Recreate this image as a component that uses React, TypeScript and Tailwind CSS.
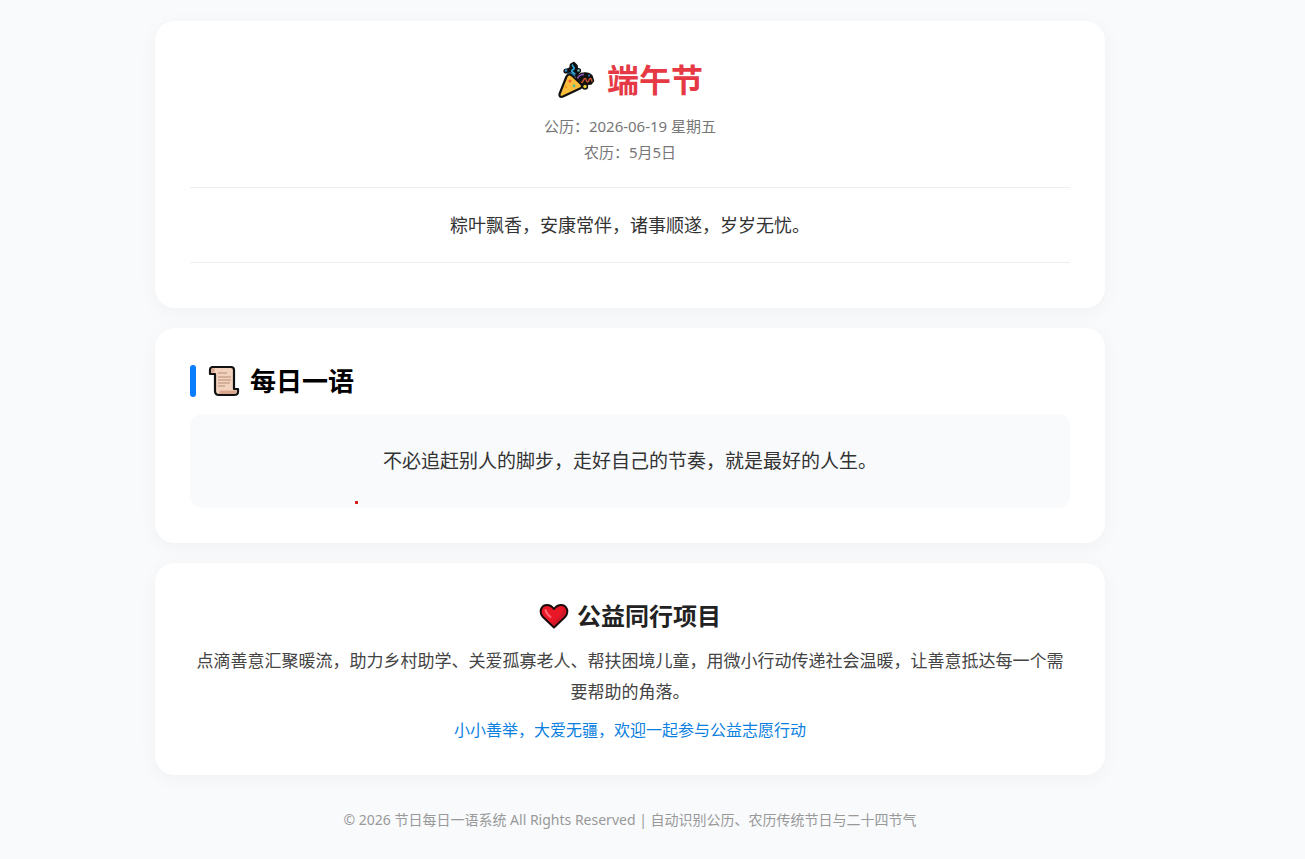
import type { ReactNode } from "react";

function PartyPopper() {
  return (
    <svg viewBox="0 0 38 38" className="h-[38px] w-[38px]" aria-hidden="true">
      <path d="M8 9.500 13 7l.5-3.500L17 1.500l3 3 .5 4 2 2-3 5-4-2-4-1z" fill="#111" stroke="#111" strokeWidth="1.500" strokeLinejoin="round" />
      <circle cx="9" cy="10" r="2.600" fill="#111" />
      <circle cx="21.500" cy="9.500" r="2.600" fill="#111" />
      <path d="M19 18q3-6 8-6 5-.5 8 3l1.500 5-2.500 3-8 .5-3.500-1z" fill="#111" stroke="#111" strokeWidth="1.500" strokeLinejoin="round" />
      <circle cx="28" cy="25.500" r="3.200" fill="#111" />
      <path d="M10.500 13.500c3-2 5-1 7 1.500" fill="none" stroke="#2b8fc9" strokeWidth="1.800" />
      <path d="M16 3.500c-2 2 2 2 1 4s-3 1-2 3 3 1 3 3" fill="none" stroke="#2fa8dc" strokeWidth="1.700" />
      <circle cx="9" cy="9.500" r="1.300" fill="#2b8fd0" />
      <circle cx="21.500" cy="9.500" r="1.300" fill="#64b9b0" />
      <path d="M20.500 17.500c1-3 3.500-4 6.500-4" fill="none" stroke="#8b55b8" strokeWidth="1.600" />
      <path d="M24 21.500c3 .5 2-4 4-4s.5 3.500 2.500 3.500 1-4 3-3.500.5 3 2 3" fill="none" stroke="#d3562c" strokeWidth="1.400" />
      <circle cx="32" cy="14.500" r="1" fill="#3b78cc" />
      <circle cx="28" cy="25.500" r="1.700" fill="#e9cf35" />
      <path d="M9.500 15.500Q11.500 12 15 14.500L24 23q2.500 3-1 4.500L6 35.500Q2 37 2.500 33z" fill="#fbbd3c" stroke="#111" strokeWidth="2.200" strokeLinejoin="round" />
      <circle cx="13" cy="20" r="1.500" fill="#ef5a30" />
      <circle cx="17" cy="25" r="1.400" fill="#57b895" />
      <circle cx="9" cy="26" r="1.200" fill="#f59a24" />
    </svg>
  );
}

function Scroll() {
  return (
    <svg viewBox="0 0 32 32" className="h-8 w-8" aria-hidden="true">
      <path d="M4 2h19q3 0 3 3v19h4v3q0 3-4 3H11q-4 0-4-4V9H2V5q0-3 3-3z" fill="#f2d2bd" stroke="#111" strokeWidth="2.200" strokeLinejoin="round" />
      <path d="M3.500 3.500h3v4h-3zM12 25.500h16.500v1.500q-1 2-4 2H11z" fill="#d9a58e" />
      <path d="M10 8h9M10 12h13M10 15h13M10 18h12M10 21h7" stroke="#b78c78" strokeWidth="1.200" />
    </svg>
  );
}

function Heart() {
  return (
    <svg viewBox="0 0 30 28" className="h-7 w-[30px]" aria-hidden="true">
      <path d="M15 25.500 4 15C-1 9 3 3 8 3c3.500 0 5.500 2 7 4 1.500-2 3.500-4 7-4 5 0 9 6 4 12z" fill="#ea1727" stroke="#180b0b" strokeWidth="2" strokeLinejoin="round" />
      <path d="M23.500 5c2 4-2 10-10 16l1.500 2.500L25 14q4-5-1.500-9z" fill="#cf1728" />
      <path d="M6.500 8c.5 3 2.500 5 5 7" fill="none" stroke="#ff6670" strokeWidth="2" strokeLinecap="round" />
    </svg>
  );
}

function Card({ children, center = false }: { children: ReactNode; center?: boolean }) {
  return (
    <section
      className={
        center
          ? "rounded-[20px] bg-white p-[35px] text-center shadow-[0_4px_20px_rgba(0,0,0,0.04)]"
          : "rounded-[20px] bg-white p-[35px] shadow-[0_4px_20px_rgba(0,0,0,0.04)]"
      }
    >
      {children}
    </section>
  );
}

export default function App() {
  return (
    <div className="min-h-screen bg-[#f8fafc] pt-[21px] pr-[65px] pb-5 pl-5 font-['Noto_Sans','Noto_Sans_CJK_SC',sans-serif] text-[#333]">
      <main className="mx-auto flex max-w-[950px] flex-col gap-5">
        <Card center>
          <h1 className="flex h-12 items-center justify-center gap-3 text-[32px] font-bold text-[#e63946]">
            <PartyPopper />
            端午节
          </h1>
          <div className="mt-[9px] text-[15px] leading-[26px] text-[#777]">
            <p>公历：2026-06-19 星期五</p>
            <p>农历：5月5日</p>
          </div>
          <p className="mt-[22px] mb-[10px] border-y border-[#eee] py-5 text-[18px] leading-[34px]">
            粽叶飘香，安康常伴，诸事顺遂，岁岁无忧。
          </p>
        </Card>

        <Card>
          <h2 className="flex h-9 items-center text-[26px] font-bold text-black">
            <span className="mr-3 h-8 w-1.5 rounded-[3px] bg-[#087cff]" />
            <Scroll />
            <span className="ml-[10px]">每日一语</span>
          </h2>
          <div className="relative mt-[15px] rounded-xl bg-[#f8fafc] px-6 py-[30px] text-center text-[19px] leading-[34px]">
            <p>不必追赶别人的脚步，走好自己的节奏，就是最好的人生。</p>
            <span className="absolute bottom-1 left-[165px] h-[3px] w-[3px] bg-[#d92020]" />
          </div>
        </Card>

        <Card center>
          <h2 className="flex h-9 items-center justify-center gap-2 text-[24px] font-bold text-[#222]">
            <Heart />
            公益同行项目
          </h2>
          <p className="mt-[11px] text-[17px] leading-[31px] text-[#444]">
            点滴善意汇聚暖流，助力乡村助学、关爱孤寡老人、帮扶困境儿童，用微小行动传递社会温暖，让善意抵达每一个需要帮助的角落。
          </p>
          <p className="mt-[13px] text-[16px] leading-5 text-[#0a7fe0]">小小善举，大爱无疆，欢迎一起参与公益志愿行动</p>
        </Card>
      </main>
      <footer className="mx-auto mt-[35px] max-w-[950px] text-center text-[14px] leading-5 text-[#999]">
        © 2026 节日每日一语系统 All Rights Reserved | 自动识别公历、农历传统节日与二十四节气
      </footer>
    </div>
  );
}
